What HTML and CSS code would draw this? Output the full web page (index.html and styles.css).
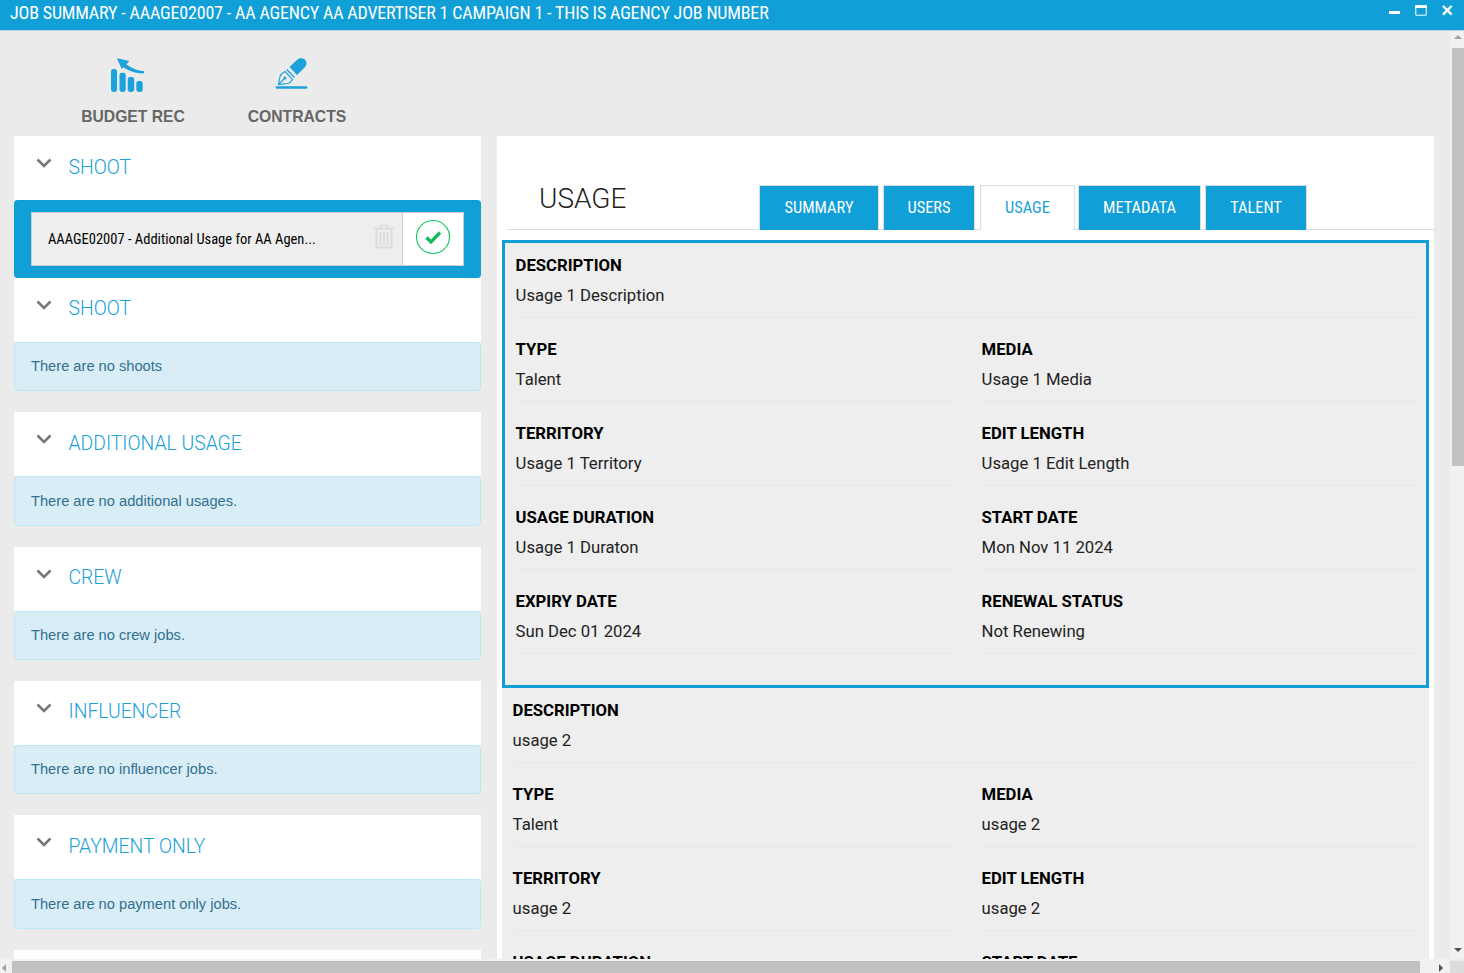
FILE: index.html
```html
<!DOCTYPE html>
<html lang="en">
<head>
<meta charset="utf-8">
<title>Job Summary</title>
<link rel="stylesheet" href="styles.css">
</head>
<body>
<header class="titlebar">
  <h1 class="window-title">JOB SUMMARY - AAAGE02007 - AA AGENCY AA ADVERTISER 1 CAMPAIGN 1 - THIS IS AGENCY JOB NUMBER</h1>
  <div class="window-controls">
    <svg class="win-icon" viewBox="0 0 14 14"><rect x="1" y="7" width="11" height="3" fill="#fff"/></svg>
    <svg class="win-icon" viewBox="0 0 14 14"><path d="M1.800 1.500h10.400v9.700H1.800z" fill="none" stroke="#fff"/><rect x="1.300" y="1" width="11.400" height="3" fill="#fff"/></svg>
    <svg class="win-icon" viewBox="0 0 14 14"><path d="M3 2l8.600 8.600M11.600 2 3 10.600" fill="none" stroke="#fff" stroke-width="2.400"/></svg>
  </div>
</header>
<div class="shell">
  <main class="viewport">
    <nav class="actions">
      <a class="action">
        <svg class="action-icon icon-budget" viewBox="0 0 38 38">
          <g fill="#1ba1db">
            <rect x="3" y="13" width="6" height="23" rx="2.400"/>
            <rect x="11.500" y="16.800" width="6.200" height="19.200" rx="2.400"/>
            <rect x="19.700" y="21" width="6.500" height="15" rx="2.400"/>
            <rect x="28.300" y="25" width="6.400" height="11" rx="2.400"/>
            <path d="M9 2.300 21.300 5 18.300 8.600C24 12.300 29.700 15 36 15.300 36.300 16 36 17.500 35 17.600 28 17.300 20.500 15 15.300 11.300L13.700 13Z"/>
          </g>
        </svg>
        <span class="action-label">BUDGET REC</span>
      </a>
      <a class="action">
        <svg class="action-icon icon-pen" viewBox="0 0 38 38">
          <g fill="#1ba1db">
            <path d="M15.500 11 23.500 3.500C25.500 1.700 29 1.700 31 3.700 33 5.700 33 9 31 11L23 19Z"/>
            <rect x="1.700" y="30.300" width="31.600" height="2.400" rx="1.200"/>
            <circle cx="11" cy="22" r="1.500"/>
          </g>
          <path d="M12.700 13.500 20.500 21.500" fill="none" stroke="#1ba1db" stroke-width="1.400"/>
          <path d="M4.500 28.500 6 20.500C6.500 18.500 9 16.500 11 15.500L18.500 23.500C17.500 25.500 15.500 27 13.500 27.500ZM4.500 28.500 10.500 22.500" fill="none" stroke="#1ba1db" stroke-width="1.100"/>
        </svg>
        <span class="action-label">CONTRACTS</span>
      </a>
    </nav>
    <div class="columns">
      <aside class="sidebar">
        <section class="group">
          <div class="group-head"><svg class="chevron" viewBox="0 0 16 11"><path d="M1.500 1.500 8 8l6.500-6.500" fill="none" stroke="#777" stroke-width="2.600"/></svg><h2 class="group-title">SHOOT</h2></div>
          <div class="job-wrap">
            <div class="job">
              <div class="job-main">
                <span class="job-name">AAAGE02007 - Additional Usage for AA Agen...</span>
                <svg class="trash" viewBox="0 0 22 26"><g fill="none" stroke="#dcdcdc"><path d="M1 5.500h20" stroke-width="2"/><path d="M7.500 5V2.500h7V5" stroke-width="1.600"/><path d="M3.500 6.500V23a1.500 1.500 0 0 0 1.500 1.500h12a1.500 1.500 0 0 0 1.500-1.500V6.500" stroke-width="2"/><path d="M7.500 9v13M11 9v13M14.500 9v13" stroke-width="1.800"/></g></svg>
              </div>
              <div class="job-status">
                <svg class="check" viewBox="0 0 36 36"><circle cx="18" cy="18" r="16.500" fill="#fff" stroke="#1ec76b" stroke-width="1.200"/><path d="M11.500 18.500 16 23 25 13.500" fill="none" stroke="#10b95c" stroke-width="3.300"/></svg>
              </div>
            </div>
          </div>
        </section>
        <section class="group">
          <div class="group-head"><svg class="chevron" viewBox="0 0 16 11"><path d="M1.500 1.500 8 8l6.500-6.500" fill="none" stroke="#777" stroke-width="2.600"/></svg><h2 class="group-title">SHOOT</h2></div>
          <div class="notice">There are no shoots</div>
        </section>
        <section class="group">
          <div class="group-head"><svg class="chevron" viewBox="0 0 16 11"><path d="M1.500 1.500 8 8l6.500-6.500" fill="none" stroke="#777" stroke-width="2.600"/></svg><h2 class="group-title">ADDITIONAL USAGE</h2></div>
          <div class="notice">There are no additional usages.</div>
        </section>
        <section class="group">
          <div class="group-head"><svg class="chevron" viewBox="0 0 16 11"><path d="M1.500 1.500 8 8l6.500-6.500" fill="none" stroke="#777" stroke-width="2.600"/></svg><h2 class="group-title">CREW</h2></div>
          <div class="notice">There are no crew jobs.</div>
        </section>
        <section class="group">
          <div class="group-head"><svg class="chevron" viewBox="0 0 16 11"><path d="M1.500 1.500 8 8l6.500-6.500" fill="none" stroke="#777" stroke-width="2.600"/></svg><h2 class="group-title">INFLUENCER</h2></div>
          <div class="notice">There are no influencer jobs.</div>
        </section>
        <section class="group">
          <div class="group-head"><svg class="chevron" viewBox="0 0 16 11"><path d="M1.500 1.500 8 8l6.500-6.500" fill="none" stroke="#777" stroke-width="2.600"/></svg><h2 class="group-title">PAYMENT ONLY</h2></div>
          <div class="notice">There are no payment only jobs.</div>
        </section>
        <section class="group"><div class="group-head"></div></section>
      </aside>
      <section class="detail">
        <div class="detail-head">
          <h2 class="detail-title">USAGE</h2>
          <div class="tabs">
            <a class="tab tab-summary">SUMMARY</a>
            <a class="tab tab-users">USERS</a>
            <a class="tab tab-usage is-active">USAGE</a>
            <a class="tab tab-metadata">METADATA</a>
            <a class="tab tab-talent">TALENT</a>
          </div>
        </div>
        <article class="usage is-selected">
          <div class="field full"><div class="label">DESCRIPTION</div><div class="value">Usage 1 Description</div></div>
          <div class="field"><div class="label">TYPE</div><div class="value">Talent</div></div>
          <div class="field"><div class="label">MEDIA</div><div class="value">Usage 1 Media</div></div>
          <div class="field"><div class="label">TERRITORY</div><div class="value">Usage 1 Territory</div></div>
          <div class="field"><div class="label">EDIT LENGTH</div><div class="value">Usage 1 Edit Length</div></div>
          <div class="field"><div class="label">USAGE DURATION</div><div class="value">Usage 1 Duraton</div></div>
          <div class="field"><div class="label">START DATE</div><div class="value">Mon Nov 11 2024</div></div>
          <div class="field"><div class="label">EXPIRY DATE</div><div class="value">Sun Dec 01 2024</div></div>
          <div class="field"><div class="label">RENEWAL STATUS</div><div class="value">Not Renewing</div></div>
        </article>
        <article class="usage">
          <div class="field full"><div class="label">DESCRIPTION</div><div class="value">usage 2</div></div>
          <div class="field"><div class="label">TYPE</div><div class="value">Talent</div></div>
          <div class="field"><div class="label">MEDIA</div><div class="value">usage 2</div></div>
          <div class="field"><div class="label">TERRITORY</div><div class="value">usage 2</div></div>
          <div class="field"><div class="label">EDIT LENGTH</div><div class="value">usage 2</div></div>
          <div class="field"><div class="label">USAGE DURATION</div><div class="value">usage 2</div></div>
          <div class="field"><div class="label">START DATE</div><div class="value">usage 2</div></div>
        </article>
      </section>
    </div>
  </main>
  <div class="vbar">
    <span class="arrow arrow-up"></span>
    <span class="vthumb"></span>
    <span class="arrow arrow-down"></span>
  </div>
  <div class="hbar">
    <span class="arrow arrow-left"></span>
    <span class="hthumb"></span>
    <span class="arrow arrow-right"></span>
  </div>
  <div class="corner"></div>
</div>
</body>
</html>
```
FILE: styles.css
```css
* { box-sizing: border-box; }
html, body { height: 100%; }
body {
  margin: 0;
  height: 973px;
  overflow: hidden;
  display: flex;
  flex-direction: column;
  background: #ebebeb;
  font-family: Roboto, "Liberation Sans", sans-serif;
}
.titlebar {
  flex: 0 0 31px;
  display: flex;
  justify-content: space-between;
  background: #119fd8;
  border-bottom: 1px solid #b8cdd8;
  color: #fff;
  padding: 0 10px;
}
.window-title {
  margin: 0;
  font-size: 18px;
  line-height: 26px;
  font-weight: 400;
  font-stretch: 75%;
  letter-spacing: -0.175px;
  white-space: nowrap;
}
.window-controls { display: flex; gap: 12px; padding: 4px 0 0; }
.win-icon { width: 14px; height: 14px; }
.shell {
  flex: 1;
  min-height: 0;
  display: grid;
  grid-template-columns: 1fr 14px;
  grid-template-rows: 1fr 14px;
}
.viewport { overflow: hidden; min-width: 0; min-height: 0; }
.actions { height: 105px; display: flex; gap: 4px; padding: 25px 0 0 53px; }
.action { width: 160px; display: flex; flex-direction: column; align-items: center; }
.action-icon { width: 38px; height: 38px; }
.icon-budget { margin-right: 12px; }
.icon-pen { margin-right: 8px; }
.action-label {
  margin-top: 14px;
  font: 700 15.700px/18px "Liberation Sans", sans-serif;
  color: #666;
}
.columns { display: flex; align-items: flex-start; gap: 16px; padding-left: 14px; }
.sidebar { width: 467px; flex: none; }
.group { margin-bottom: 20.900px; }
.group:first-child { margin-bottom: 0; }
.group-head {
  height: 64px;
  background: #fff;
  display: flex;
  padding: 19.500px 0 0 21.500px;
  gap: 17px;
}
.chevron { width: 16px; height: 11px; margin-top: 2.500px; }
.group-title {
  margin: 0;
  font-size: 19.330px;
  line-height: 23px;
  font-weight: 300;
  color: #1a9fd9;
}
.job-wrap { background: #119fd8; border-radius: 4px; padding: 12px 17px; height: 77.800px; }
.job { height: 54px; display: flex; border: 1px solid #ccc; }
.job-main {
  flex: 1;
  background: #eee;
  display: flex;
  align-items: center;
  justify-content: space-between;
  padding: 0 7px 0 16px;
  border-right: 1px solid #ccc;
}
.job-name { font-size: 14.500px; font-stretch: 75%; color: #000; }
.trash { width: 22px; height: 26px; margin-top: -6px; }
.job-status { width: 60px; background: #fff; display: flex; align-items: center; justify-content: center; }
.check { width: 36px; height: 36px; margin-top: -4px; }
.notice {
  height: 49.500px;
  padding: 13.500px 16px;
  background: #d9edf7;
  border: 1px solid #bce8f1;
  border-radius: 4px;
  font: 14.670px/20px "Liberation Sans", sans-serif;
  color: #31708f;
}
.detail { width: 937px; flex: none; background: #fff; padding: 0 5px; }
.detail-head {
  height: 94px;
  padding: 49px 0 0 32px;
  margin: 0 -5px 10px 5px;
  display: flex;
  border-bottom: 1px solid #ddd;
}
.detail-title { margin: 0; width: 220px; font-size: 28px; line-height: 28px; font-weight: 300; color: #222; }
.tabs { display: flex; height: 45px; }
.tab {
  display: block;
  height: 45px;
  line-height: 43px;
  text-align: center;
  font-size: 16.400px;
  font-stretch: 75%;
  font-weight: 400;
  color: #fff;
  background: #119fd8;
  border: 1px solid #ddd;
  border-bottom: 0;
}
.tab-summary { width: 120px; margin-right: 4px; }
.tab-users { width: 92px; margin-right: 5px; }
.tab-usage { width: 95px; margin-right: 3px; }
.tab-metadata { width: 123px; margin-right: 4px; }
.tab-talent { width: 102px; }
.tab.is-active { background: #fff; color: #1a9fd9; }
.usage {
  width: 927px;
  background: #eee;
  display: grid;
  padding: 10px 13px 6px 10.600px;
  grid-template-columns: 469px 1fr;
}
.usage.is-selected {
  height: 448px;
  border: 3px solid #119fd8;
  padding: 10px 10px 0 10.600px;
  grid-template-columns: 466px 1fr;
  align-content: start;
}
.field {
  height: 84px;
  padding-top: 1px;
}
.field:nth-child(even) { margin-right: 30px; }
.field.full { grid-column: 1 / -1; }
.label { font-size: 16.700px; line-height: 24px; font-weight: 700; color: #000; }
.value {
  font-size: 16.700px;
  line-height: 24px;
  margin-top: 6px;
  padding-bottom: 9px;
  color: #222;
  border-bottom: 1px solid #e8e8e8;
}
.vbar { background: #f1f1f1; position: relative; display: flex; flex-direction: column; align-items: flex-end; }
.vthumb { width: 12px; height: 418px; margin-top: 17px; background: #c1c1c1; flex: none; }
.hbar { background: #f1f1f1; display: flex; align-items: flex-end; }
.hthumb { width: 1408px; height: 12px; margin-left: 12px; background: #c1c1c1; flex: none; }
.corner { background: #dcdcdc; margin-top: 2px; }
.arrow { position: absolute; width: 0; height: 0; border: 4px solid transparent; }
.vbar .arrow { right: 2px; }
.arrow-up { top: 4px; border-top: 0; border-bottom: 4px solid #a3a3a3; }
.arrow-down { bottom: 7px; border-bottom: 0; border-top: 4px solid #505050; }
.arrow-left { left: 2px; bottom: 1px; border-left: 0; border-right: 4px solid #a3a3a3; }
.arrow-right { right: 21px; bottom: 1px; border-right: 0; border-left: 4px solid #505050; }
```
